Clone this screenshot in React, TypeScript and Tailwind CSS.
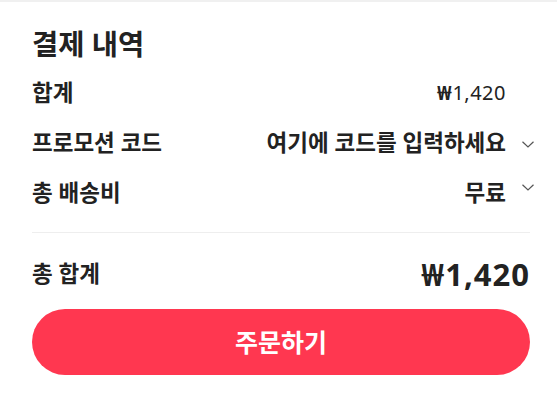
import { ReactNode } from "react";

function Chevron({ raised = false }: { raised?: boolean }) {
  return (
    <svg
      width="12"
      height="7"
      viewBox="0 0 12 7"
      className={raised ? "-mt-[9px]" : "mt-[2px]"}
    >
      <polyline points="0.5,0.8 6,6 11.5,0.8" fill="none" stroke="#555" strokeWidth="1.2" />
    </svg>
  );
}

function Row({ label, value, chevron }: { label: string; value: ReactNode; chevron?: ReactNode }) {
  return (
    <div className="flex h-[50px] items-center justify-between">
      <span className="text-[22.5px] font-semibold text-[#222]">{label}</span>
      <div className="flex items-center">
        {value}
        <div className="ml-4 -mr-[4px] flex w-[12px] justify-center">{chevron}</div>
      </div>
    </div>
  );
}

export default function App() {
  return (
    <div className="h-[400px] w-[557px] border-t-2 border-[#f0f0f0] bg-white font-['Noto_Sans','Noto_Sans_CJK_KR',sans-serif] leading-none text-[#222]">
      <div className="pl-8 pr-[27px] pt-[18px]">
        <h2 className="flex h-[48px] items-center text-[28.5px] font-bold">결제 내역</h2>

        <Row
          label="합계"
          value={
            <span className="text-[20px] tracking-[0.5px]">
              <span className="font-bold">₩</span>1,420
            </span>
          }
        />
        <Row
          label="프로모션 코드"
          value={<span className="text-[22.5px] font-semibold">여기에 코드를 입력하세요</span>}
          chevron={<Chevron />}
        />
        <Row
          label="총 배송비"
          value={<span className="text-[22.5px] font-semibold">무료</span>}
          chevron={<Chevron raised />}
        />

        <div className="mt-[14px] border-t border-[#eeeeee]" />

        <div className="mt-[16px] flex h-[50px] items-center justify-between">
          <span className="text-[22.5px] font-semibold">총 합계</span>
          <span className="text-[31px] font-bold tracking-[1px]">₩1,420</span>
        </div>

        <button className="mt-[10px] flex h-[66px] w-full items-center justify-center rounded-full bg-[#ff3750] text-[25px] font-bold text-white">
          주문하기
        </button>
      </div>
    </div>
  );
}
